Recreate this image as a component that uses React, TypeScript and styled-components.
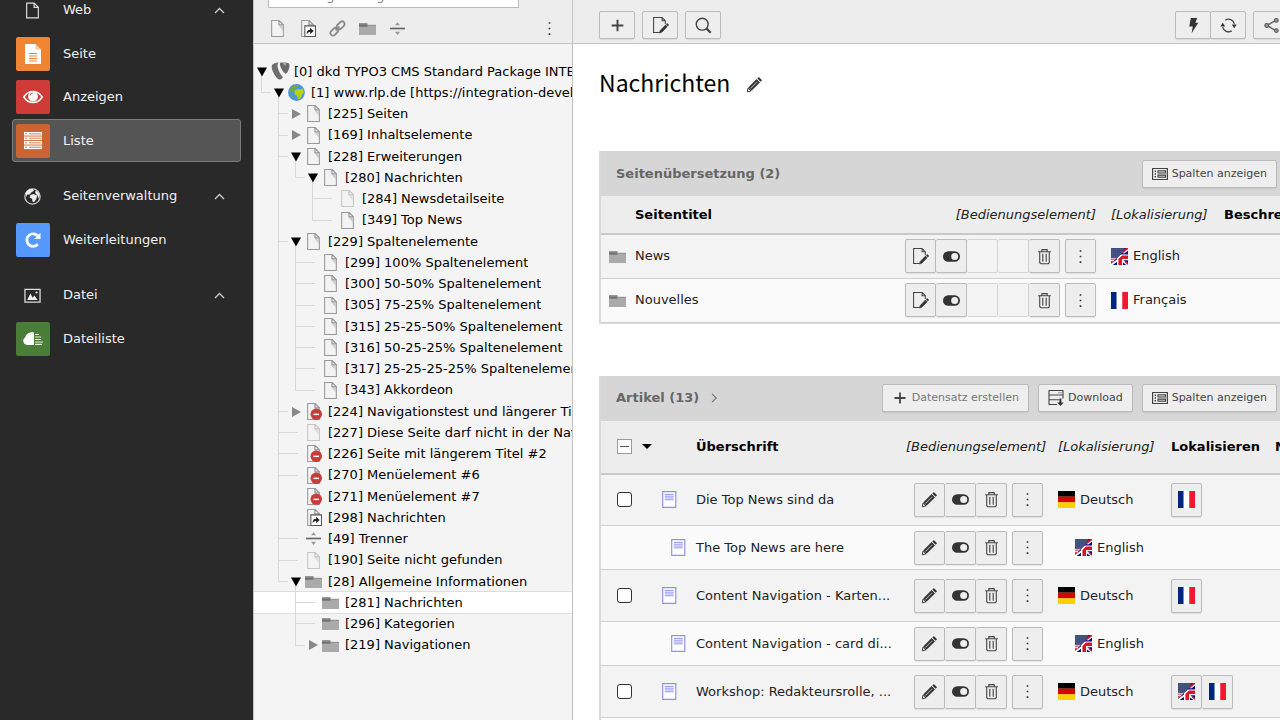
import React from "react";
import styled, { createGlobalStyle, css } from "styled-components";

const GlobalStyle = createGlobalStyle`
  * { box-sizing: border-box; }
  body {
    margin: 0;
    overflow: hidden;
    background: #fff;
    color: #222;
    font: 13px/20px Verdana, "DejaVu Sans", sans-serif;
  }
  button, input { font: inherit; color: inherit; margin: 0; padding: 0; }
  a { color: inherit; text-decoration: none; }
  ul { list-style: none; margin: 0; padding: 0; }
  svg { display: block; flex: none; }
`;

/* ---------- icons ---------- */

const Svg = ({ size = 17, children }: { size?: number; children: React.ReactNode }) => (
  <svg width={size} height={size} viewBox="0 0 16 16" aria-hidden="true">
    {children}
  </svg>
);

const PageShape = ({ faded }: { faded?: boolean }) => (
  <g opacity={faded ? 0.5 : 1}>
    <path d="M2.5.5h7l4 4v11h-11z" fill="#f3f3f3" stroke="#999" />
    <path d="M8.5 1v3.5L13 10V5L9 1z" fill="#ccc" />
    <path d="M9.5.5v4h4z" fill="#fff" stroke="#999" strokeLinejoin="round" />
  </g>
);
const PageIcon = ({ faded }: { faded?: boolean }) => (
  <Svg><PageShape faded={faded} /></Svg>
);
const HiddenPageIcon = () => (
  <Svg>
    <PageShape />
    <circle cx="10.6" cy="10.6" r="5.4" fill="#c83c3c" />
    <path d="M8 10h5.200v1.400H8z" fill="#fff" />
  </Svg>
);
const ShortcutIcon = () => (
  <Svg>
    <PageShape />
    <path d="M5.500 5.500h10v10h-10z" fill="#fff" stroke="#555" />
    <path d="M7.300 13.500c-.4-2.600.8-4.400 3.200-4.400V7.200l3.300 3.100-3.300 3V11.400c-1.300-.1-2.300.6-3.200 2.100z" fill="#222" />
  </Svg>
);
const LinkIcon = () => (
  <Svg>
    <g fill="none" stroke="#8a8a8a" strokeWidth="1.700" transform="rotate(-45 8 8)">
      <rect x="-.4" y="5.600" width="8.200" height="4.800" rx="2.400" />
      <rect x="8.200" y="5.600" width="8.200" height="4.800" rx="2.400" />
      <path d="M5.500 8h5" />
    </g>
  </Svg>
);
const FolderIcon = () => (
  <Svg>
    <path d="M0 3h8v2h8v9H0z" fill="#aaa" />
    <path d="M0 3h7.500l.5.600v2.400H0z" fill="#8a8a8a" />
    <path d="M0 4.600h8v1.600H0z" fill="#6f6f6f" />
    <path d="M8 4.500h8V5.500H8z" fill="#8f8f8f" />
  </Svg>
);
const DividerIcon = () => (
  <Svg>
    <path d="M1 7.200h14v1.600H1z" fill="#666" />
    <path d="M8 2l2.400 3H5.600zM8 14l2.400-3H5.600z" fill="#999" />
  </Svg>
);
const DotsIcon = () => (
  <Svg>
    <path d="M7.200 2h1.600v1.600H7.200zM7.200 7.200h1.600v1.600H7.200zM7.200 12.400h1.600V14H7.200z" fill="#333" />
  </Svg>
);
const TypoIcon = () => (
  <svg width="19" height="19" viewBox="0 0 18 18" aria-hidden="true">
    <path d="M1.200 2.600C2 1.500 4.600.8 7.300.5 6.400 1.400 6 2.600 6.300 4.400c.5 3.400 2.500 7.300 5 10-1.300 1.700-2.700 2.600-3.800 2.200C4.900 15.400 1.100 8.900.7 5.400.6 4.100.7 3.300 1.200 2.600z" fill="#6e6e6e" />
    <path d="M8.800.6c2.600-.3 6.400-.2 7.900.6.900.6 1 2.100.6 4-.4 2.200-1.800 5-3.200 6-2.200-1.200-4.900-5.200-5.500-8.200-.2-1-.2-1.900.2-2.400z" fill="#6a6a6a" />
    <path d="M10.800.6l2.800 3.400L14.600.6z" fill="#aaa" />
  </svg>
);
const WorldIcon = () => (
  <Svg>
    <circle cx="8" cy="8" r="7.900" fill="#4b94e6" />
    <path d="M4.500 1.800C6.500.8 9 .8 10.500 1.500l-1.300 1.700-2.400.4-1 1.800 1.400 1.400-.8 1.400-1.400-.6-1.900-1.600-.9 2-1.100-.4c.2-2.400 1.600-4.700 3.400-5.800z" fill="#6fae3a" />
    <path d="M7 5.500l3-.8 2.200.5 1.200-1.300c1.400 1.600 1.500 3.300 1.200 5l-1.200.4-.7 2.500-1.800 2.600-1.600-.3-.7-3-1.800-.8-1-2.400z" fill="#b5d312" />
    <path d="M2.400 9.400l1.800 1.200.6 2.600-1.500-.6z" fill="#6fae3a" />
  </Svg>
);
const PencilIcon = () => (
  <Svg>
    <path d="M12.100.9l3 3-1.400 1.400-3-3z" fill="#333" />
    <path d="M10 2.900l3.100 3.100-7.900 7.900-3.100-3.100z" fill="#333" />
    <path d="M10.300 5.100l.6.600-6.300 6.300-.6-.6z" fill="#aaa" />
    <path d="M1.900 11.400l2.700 2.700-3.400.8z" fill="#fff" stroke="#333" strokeWidth=".9" />
  </Svg>
);
const EditPageIcon = () => (
  <Svg>
    <path d="M7 14.500H1.500v-14h8L12.500 3.500v3M9.500.5v3h3" fill="none" stroke="#444" />
    <path d="M14.300 6l1.500 1.500-1 1-1.500-1.500zM12.700 7.600l1.600 1.600-5 5.100-2.400.8.800-2.400z" fill="#333" stroke="#333" strokeWidth=".5" />
  </Svg>
);
const PlusIcon = ({ size }: { size?: number }) => (
  <Svg size={size}><path d="M7.100 2.500h1.800v4.600h4.600v1.800H8.900v4.600H7.100V8.900H2.500V7.100h4.600z" fill="#444" /></Svg>
);
const SearchIcon = () => (
  <Svg>
    <circle cx="6.800" cy="6.800" r="5.600" fill="none" stroke="#444" strokeWidth="1.300" />
    <path d="M10.800 10.800l4 4" stroke="#444" strokeWidth="2.200" />
  </Svg>
);
const BoltIcon = () => (
  <Svg><path d="M5.500 1h6L9.700 5.500h2.800L6.200 15.300 7.300 9H4z" fill="#333" /></Svg>
);
const RefreshIcon = () => (
  <Svg>
    <g fill="none" stroke="#444" strokeWidth="1.200">
      <path d="M2.500 9.500a5.700 5.700 0 0 0 8.500 3.600" />
      <path d="M13.500 6.500A5.700 5.700 0 0 0 5 2.900" />
    </g>
    <path d="M2.600 5.500L4.900 9H.3zM13.400 10.500L11.100 7h4.600z" fill="#333" />
  </Svg>
);
const ShareIcon = () => (
  <Svg>
    <path d="M12.500 3L3.500 8l9 5" fill="none" stroke="#666" strokeWidth="1.400" />
    <g fill="#999" stroke="#555">
      <circle cx="12.500" cy="3.200" r="1.800" />
      <circle cx="3.500" cy="8" r="1.800" />
      <circle cx="12.500" cy="12.800" r="1.800" />
    </g>
  </Svg>
);
const ColumnsIcon = () => (
  <Svg size={16}>
    <path d="M.6 2.500h14.800v11H.6z" fill="none" stroke="#444" strokeWidth="1.200" />
    <path d="M2.600 4.600h1.400v1.400H2.600zM2.600 7.300h1.400v1.400H2.600zM2.600 10.100h1.400v1.400H2.600z" fill="#444" />
    <path d="M6 4.700h7.500v2.300H6zM6 9.100h7.500v2.200H6z" fill="#ccc" stroke="#444" strokeWidth="1.100" />
  </Svg>
);
const DownloadIcon = () => (
  <Svg size={16}>
    <path d="M9 14.500H1v-14h14v8M1 5h14M1 9.700h10" fill="none" stroke="#444" strokeWidth="1.100" />
    <path d="M10.500 2.300h1v1h-1zM12.500 2.300h1v1h-1z" fill="#444" />
    <path d="M11.400 8.500h2v4h2.300l-3.300 3.500-3.300-3.500h2.300z" fill="#333" />
  </Svg>
);
const ToggleIcon = () => (
  <Svg>
    <rect x="0" y="3" width="16" height="10" rx="5" fill="#333" />
    <circle cx="11" cy="8" r="3.300" fill="#eee" />
  </Svg>
);
const TrashIcon = () => (
  <Svg>
    <path d="M2 3.500h12M5.500 3.500v-2h5v2M3.500 3.500v10.300l1 1h7l1-1V3.500M6.400 5.500v7.500M9.600 5.500v7.500" fill="none" stroke="#444" strokeWidth="1.050" />
  </Svg>
);
const NewsIcon = () => (
  <Svg>
    <path d="M1.600.6h12.300v14.800H1.600z" fill="#fff" stroke="#8c92e8" strokeWidth="1.100" />
    <path d="M3.500 3.200h8.500M3.500 4.900h8.500M3.500 6.600h8.500M3.500 8.300h8.500" stroke="#8c92e8" strokeWidth=".9" />
  </Svg>
);
const GermanFlag = () => (
  <Svg>
    <path d="M0 0h16v5.400H0z" fill="#000" />
    <path d="M0 5.300h16v5.400H0z" fill="#d00" />
    <path d="M0 10.600h16V16H0z" fill="#ffce00" />
  </Svg>
);
const FrenchFlag = () => (
  <Svg>
    <path d="M0 0h5.500v16H0z" fill="#00267f" />
    <path d="M5.300 0h5.400v16H5.300z" fill="#fff" />
    <path d="M10.600 0H16v16h-5.400z" fill="#f31830" />
  </Svg>
);
const EnglishFlag = () => (
  <Svg>
    <path d="M0 0h16v16H0z" fill="#00107d" />
    <path d="M11 3.500L16 0v2.500L12 5.500z" fill="#fff" />
    <path d="M16 0v1.200L11 5l-1.500-.6L14 0z" fill="#dc1428" />
    <path d="M16 3.500V6h-3.500z" fill="#00107d" />
    <path d="M11 11l5 3.600V16h-1.600L10.500 13zM6 10.500L0 14.800V16h1.600L7 12z" fill="#fff" />
    <path d="M5.600 16V9.500L9 6.200h7v5.400h-4.700V16z" fill="#fff" />
    <path d="M7 16v-5.700L10.200 7H16v3.300h-5.600V16z" fill="#dc1428" />
    <path d="M16 14.200V16l-3.600-3h2z" fill="#dc1428" />
    <path d="M0 9h5.800L1.500 13.500H0z" fill="#fff" />
    <path d="M0 9.800h5L3.800 11H0zM0 12h2.800l-1.200 1.300H0z" fill="#d8505f" />
    <path d="M0 0h12.800L10.200 5 6 9.200H0z" fill="#3f4f7d" />
    <path d="M1 1.500h10M1 3.500h9M1 5.500h8M1 7.500h6" stroke="#5d6c94" strokeWidth=".7" strokeDasharray=".8 1.200" />
  </Svg>
);
const flags = { de: <GermanFlag />, fr: <FrenchFlag />, en: <EnglishFlag /> };

const ChevronUp = () => (
  <svg width="11" height="7" viewBox="0 0 11 7" aria-hidden="true">
    <path d="M1 6l4.500-4.500L10 6" fill="none" stroke="#ccc" strokeWidth="1.300" />
  </svg>
);
const ChevronRight = () => (
  <svg width="10" height="10" viewBox="0 0 10 10" aria-hidden="true">
    <path d="M4 .8L8.200 5 4 9.200" fill="none" stroke="#777" strokeWidth="1.200" />
  </svg>
);

/* module menu icons */
const WebIcon = () => (
  <Svg><path d="M2.500 1h7l4 4v10h-11zM9.500 1v4h4" fill="none" stroke="#ddd" strokeWidth="1.100" /></Svg>
);
const GlobeIcon = () => (
  <Svg>
    <circle cx="8" cy="8" r="7.200" fill="none" stroke="#ccc" strokeWidth="1.200" />
    <path d="M1.500 5C3 2 5.500.8 8 1l1.500 1.500L7 4 5.500 6.200 3 6l-1 2.500zM6 6.500l3-.8 2 1 1.500.3-.8 3L9.500 13.500l-1.500-.7L7.600 10 5.300 9zM11 2.500l2 .8 1.700 3-.7 4-1.200-3.200L11 5.500l-.6-1.700z" fill="#eee" />
  </Svg>
);
const ImageIcon = () => (
  <Svg>
    <path d="M.9 2.200h14.200v12H.9z" fill="none" stroke="#ddd" strokeWidth="1.200" />
    <path d="M3 12.200l3-6.200 2.200 4 1.600-2 3 4.200z" fill="#eee" />
    <circle cx="11.800" cy="5.200" r="1" fill="#eee" />
  </Svg>
);
const Glyph = ({ children }: { children: React.ReactNode }) => (
  <svg width="34" height="34" viewBox="0 0 34 34" aria-hidden="true">{children}</svg>
);
const LayoutGlyph = () => (
  <Glyph>
    <path d="M9 7h10.500l5.500 5.500V27H9z" fill="#fff" />
    <path d="M19.500 7v5.500H25z" fill="#f8c79c" />
    <path d="M13 16.500h8M13 19h8M13 21.500h8M13 24h8" stroke="#ef8533" strokeWidth="1" />
  </Glyph>
);
const ViewGlyph = () => (
  <Glyph>
    <path d="M7.800 17C12.500 9.600 21.500 9.600 26.200 17 21.500 24.400 12.500 24.400 7.800 17z" fill="none" stroke="#fff" strokeWidth="1.500" />
    <circle cx="17" cy="16.500" r="4.900" fill="#fff" />
    <path d="M14 15.500a3 3 0 0 1 2.800-2.500" fill="none" stroke="#cf3b37" strokeWidth=".9" />
  </Glyph>
);
const ListGlyph = () => (
  <Glyph>
    {[8, 12.5, 17, 21.5].map((y) => (
      <g key={y}>
        <path d={`M8 ${y}h18v3.600H8z`} fill="#fff" />
        <path d={`M13 ${y + 1.1}h12v1.400H13z`} fill="#dba285" />
        <path d={`M9 ${y + 1.1}h2v1.400H9z`} fill="#dba285" />
      </g>
    ))}
  </Glyph>
);
const RedirectGlyph = () => (
  <Glyph>
    <path d="M22.300 13.400A6.300 6.300 0 1 0 21.900 21.200" fill="none" stroke="#fff" strokeWidth="2.700" />
    <path d="M24.500 9.800v6.200H18.200z" fill="#fff" />
  </Glyph>
);
const FilesGlyph = () => (
  <Glyph>
    <path d="M18 23h-7a4 4 0 0 1-1.800-7.400C9.800 12 13.800 9.600 18 10.500z" fill="#fff" />
    <path d="M19 12.500h4M19 15h6M19 17.500h6M19 20h8M19 22.300h7" stroke="#e5eee0" strokeWidth="1.200" />
  </Glyph>
);

/* ---------- shell ---------- */

const Shell = styled.div`
  display: flex;
  height: 100vh;
  overflow: hidden;
`;

const Sidebar = styled.nav`
  flex: none;
  width: 253px;
  padding: 0 12px;
  background: #292929;
  color: #f0f0f0;
  overflow: hidden;
`;

/* the menu is scrolled a little, its first heading starts above the window */
const ModuleGroup = styled.section`
  margin-bottom: 13px;
  &:first-child { margin-top: -11px; }
`;
const GroupHeader = styled.button`
  display: flex;
  align-items: center;
  width: 100%;
  height: 42px;
  margin-bottom: 1px;
  padding: 0 16px 0 12px;
  border: 0;
  background: none;
  text-align: left;
`;
const GroupLabel = styled.span`
  flex: 1;
  padding-left: 22px;
`;
const ModuleList = styled.ul`
  display: grid;
  grid-auto-rows: 43px 44px 43px;
`;
const ModuleLink = styled.a<{ $active?: boolean }>`
  display: flex;
  align-items: center;
  gap: 13px;
  height: 43px;
  padding-left: 3px;
  border: 1px solid ${(p) => (p.$active ? "#7c7c7c" : "transparent")};
  border-radius: 3px;
  background: ${(p) => (p.$active ? "#555" : "none")};
`;
const Tile = styled.span<{ $color: string }>`
  width: 34px;
  height: 34px;
  border-radius: 2px;
  background: ${(p) => p.$color};
`;

const groups = [
  {
    name: "Web",
    icon: <WebIcon />,
    items: [
      { name: "Seite", color: "#ef8533", icon: <LayoutGlyph /> },
      { name: "Anzeigen", color: "#cf3b37", icon: <ViewGlyph /> },
      { name: "Liste", color: "#cb6432", icon: <ListGlyph />, active: true },
    ],
  },
  {
    name: "Seitenverwaltung",
    icon: <GlobeIcon />,
    items: [{ name: "Weiterleitungen", color: "#5599ff", icon: <RedirectGlyph /> }],
  },
  {
    name: "Datei",
    icon: <ImageIcon />,
    items: [{ name: "Dateiliste", color: "#4a7d37", icon: <FilesGlyph /> }],
  },
];

/* ---------- page tree ---------- */

const TreePane = styled.aside`
  display: flex;
  flex-direction: column;
  flex: none;
  width: 320px;
  border: solid #c3c3c3;
  border-width: 0 1px;
  background: #f4f4f4;
  color: #000;
  overflow: hidden;
`;
const TreeHeader = styled.header`
  display: flex;
  flex-direction: column;
  justify-content: flex-end;
  gap: 5px;
  flex: none;
  height: 44px;
  padding: 0 8px;
  border-bottom: 1px solid #c3c3c3;
  background: #ededed;
  overflow: hidden;
`;
const SearchInput = styled.input`
  flex: none;
  width: 251px;
  height: 26px;
  margin-left: 6px;
  padding: 0 9px;
  border: 1px solid #bbb;
  background: #fff;
  &::placeholder { color: #888; }
`;
const TreeTools = styled.div`
  display: flex;
  flex: none;
  height: 30px;
`;
const ToolButton = styled.button`
  display: grid;
  place-items: center;
  width: 30px;
  border: 0;
  background: none;
  &:last-child { margin-left: auto; }
`;
const TreeList = styled.ul`
  display: grid;
  grid-template-columns: minmax(0, 1fr);
  grid-auto-rows: 21px 21px 21px 22px;
  padding-top: 17px;
`;
const TreeRow = styled.li<{ $selected?: boolean }>`
  display: flex;
  align-items: center;
  white-space: nowrap;
  ${(p) => p.$selected && css`
    background: #fff;
    box-shadow: 0 -1px #ddd, 0 1px #ddd;
  `}
`;
const line = "linear-gradient(#d8d8d8, #d8d8d8) no-repeat";
const Guide = styled.span<{ $kind: string }>`
  align-self: stretch;
  flex: none;
  width: 17px;
  background: ${(p) =>
    ({
      " ": "none",
      "|": `${line} 7px 0 / 1px 100%`,
      "+": `${line} 7px 0 / 1px 100%, ${line} 7px 50% / 10px 1px`,
      L: `${line} 7px 0 / 1px 50%, ${line} 7px 50% / 10px 1px`,
    })[p.$kind]};
`;
const ToggleCell = styled.span<{ $dash: boolean; $stem: boolean }>`
  display: grid;
  place-items: center;
  align-self: stretch;
  flex: none;
  width: 17px;
  background: ${(p) =>
    p.$dash ? `${line} 0 50% / 10px 1px` : p.$stem ? `${line} 7px 100% / 1px 50%` : "none"};
`;
const Toggle = styled.button`
  display: grid;
  place-items: center;
  border: 0;
  background: none;
`;
const NodeIcon = styled.span`
  display: grid;
  place-items: center;
  flex: none;
  width: 17px;
`;
const NodeLink = styled.a`
  min-width: 0;
  padding-left: 6px;
  overflow: hidden;
`;

type Node = { g: string; t?: "open" | "closed"; i: string; n: string; sel?: boolean };
const nodes: Node[] = [
  { g: "", t: "open", i: "typo", n: "[0] dkd TYPO3 CMS Standard Package INTEGRATION" },
  { g: "L", t: "open", i: "world", n: "[1] www.rlp.de [https://integration-development]" },
  { g: " +", t: "closed", i: "page", n: "[225] Seiten" },
  { g: " +", t: "closed", i: "page", n: "[169] Inhaltselemente" },
  { g: " +", t: "open", i: "page", n: "[228] Erweiterungen" },
  { g: " |L", t: "open", i: "page", n: "[280] Nachrichten" },
  { g: " | +", i: "faded", n: "[284] Newsdetailseite" },
  { g: " | L", i: "page", n: "[349] Top News" },
  { g: " +", t: "open", i: "page", n: "[229] Spaltenelemente" },
  { g: " |+", i: "page", n: "[299] 100% Spaltenelement" },
  { g: " |+", i: "page", n: "[300] 50-50% Spaltenelement" },
  { g: " |+", i: "page", n: "[305] 75-25% Spaltenelement" },
  { g: " |+", i: "page", n: "[315] 25-25-50% Spaltenelement" },
  { g: " |+", i: "page", n: "[316] 50-25-25% Spaltenelement" },
  { g: " |+", i: "page", n: "[317] 25-25-25-25% Spaltenelement" },
  { g: " |L", i: "page", n: "[343] Akkordeon" },
  { g: " +", t: "closed", i: "hidden", n: "[224] Navigationstest und längerer Titel" },
  { g: " +", i: "faded", n: "[227] Diese Seite darf nicht in der Navigation" },
  { g: " +", i: "hidden", n: "[226] Seite mit längerem Titel #2" },
  { g: " +", i: "hidden", n: "[270] Menüelement #6" },
  { g: " |", i: "hidden", n: "[271] Menüelement #7" },
  { g: " |", i: "shortcut", n: "[298] Nachrichten" },
  { g: " +", i: "divider", n: "[49] Trenner" },
  { g: " +", i: "faded", n: "[190] Seite nicht gefunden" },
  { g: " L", t: "open", i: "folder", n: "[28] Allgemeine Informationen" },
  { g: "  +", i: "folder", n: "[281] Nachrichten", sel: true },
  { g: "  +", i: "folder", n: "[296] Kategorien" },
  { g: "  L", t: "closed", i: "folder", n: "[219] Navigationen" },
];
const nodeIcons: Record<string, React.ReactNode> = {
  typo: <TypoIcon />,
  world: <WorldIcon />,
  page: <PageIcon />,
  faded: <PageIcon faded />,
  hidden: <HiddenPageIcon />,
  shortcut: <ShortcutIcon />,
  divider: <DividerIcon />,
  folder: <FolderIcon />,
};

const TreeToggle = ({ open }: { open: boolean }) => (
  <Toggle aria-label={open ? "Zuklappen" : "Aufklappen"} aria-expanded={open}>
    <svg width="11" height="10" viewBox="0 0 11 10" aria-hidden="true">
      {open ? <path d="M0 .5h10L5 9.500z" fill="#000" /> : <path d="M1 0v10L10 5z" fill="#888" />}
    </svg>
  </Toggle>
);

/* ---------- content ---------- */

const Main = styled.main`
  flex: 1;
  min-width: 0;
  overflow: hidden;
`;
const MainInner = styled.div`
  min-width: 740px;
`;
const DocHeader = styled.header`
  display: flex;
  align-items: flex-end;
  gap: 7px;
  height: 44px;
  padding: 0 24px 4px 26px;
  border-bottom: 1px solid #c3c3c3;
  background: #ededed;
`;
const Spacer = styled.span`
  flex: 1;
`;
const Group = styled.span`
  display: inline-flex;
`;
const raised = css`
  border: 1px solid #bbb;
  background: #eee;
  box-shadow: 0 1px 1px rgba(0, 0, 0, 0.08);
`;
const HeadButton = styled.button`
  ${raised}
  display: grid;
  place-items: center;
  width: 36px;
  height: 28px;
  border-radius: 2px;
  ${Group} > & + & {
    margin-left: -1px;
  }
`;
const Body = styled.div`
  padding: 20px 24px 0 26px;
`;
const TitleRow = styled.div`
  display: flex;
  align-items: center;
  gap: 16px;
  height: 36px;
  margin-bottom: 51px;
`;
const Title = styled.h1`
  margin: 0;
  color: #000;
  font: 400 23px/36px "Noto Sans CJK SC", "Noto Sans", sans-serif;
`;
const TitleEdit = styled.button`
  margin-top: 4px;
  border: 0;
  background: none;
`;
const Panel = styled.section`
  margin-bottom: 52px;
  border: solid #d9d9d9;
  border-width: 0 2px 1px;
  overflow: hidden;
`;
const PanelHead = styled.div`
  display: flex;
  align-items: center;
  gap: 9px;
  height: 45px;
  margin: 0 -2px;
  padding: 0 12px 0 17px;
  background: #d6d6d6;
`;
const PanelTitle = styled.h2`
  margin: 0;
  color: #666;
  font-size: 13px;
  font-weight: 700;
  line-height: 20px;
`;
const PanelButton = styled.button<{ $muted?: boolean }>`
  ${raised}
  display: flex;
  align-items: center;
  gap: 4px;
  height: 28px;
  padding: 0 9px;
  border-radius: 2px;
  color: ${(p) => (p.$muted ? "#777" : "#444")};
  font-size: 11px;
  white-space: nowrap;
`;
const Table = styled.table`
  width: 100%;
  table-layout: fixed;
  border-collapse: collapse;
`;
const HeadRow = styled.tr<{ $tall?: boolean }>`
  height: ${(p) => (p.$tall ? "53px" : "38px")};
  border-bottom: 2px solid #c8c8c8;
  background: #ededed;
`;
const Row = styled.tr<{ $alt?: boolean; $tall?: boolean }>`
  height: ${(p) => (p.$tall ? "52px" : "44px")};
  border-bottom: 1px solid #d0d0d0;
  background: ${(p) => (p.$alt ? "#fafafa" : "#f3f3f3")};
`;
const Th = styled.th<{ $meta?: boolean; $right?: boolean }>`
  padding: 0 7px 0 8px;
  color: ${(p) => (p.$meta ? "#222" : "#000")};
  font-weight: ${(p) => (p.$meta ? 400 : 700)};
  font-style: ${(p) => (p.$meta ? "italic" : "normal")};
  text-align: ${(p) => (p.$right ? "right" : "left")};
  white-space: nowrap;
`;
const Td = styled.td`
  padding: 0 7px 0 8px;
  white-space: nowrap;
`;
const Controls = styled.div`
  display: flex;
  justify-content: flex-end;
  gap: 5px;
`;
const ControlButton = styled.button`
  ${raised}
  display: grid;
  place-items: center;
  width: 31px;
  height: 34px;
  border-radius: 2px;
  ${Group} > & + & { border-left: 0; }
  &:disabled {
    border-color: #d4d4d4;
    background: #f3f3f3;
    box-shadow: none;
  }
`;
const Language = styled.span<{ $nested?: boolean }>`
  display: flex;
  align-items: center;
  gap: 5px;
  padding-left: ${(p) => (p.$nested ? "17px" : "0")};
`;
const RecordIcon = styled.span<{ $nested?: boolean }>`
  display: block;
  padding-left: ${(p) => (p.$nested ? "9px" : "0")};
`;
const SelectCell = styled.div`
  display: flex;
  align-items: center;
  gap: 10px;
  padding-left: 8px;
`;
const Check = styled.input`
  display: block;
  appearance: none;
  flex: none;
  width: 15px;
  height: 15px;
  border: 1px solid #333;
  border-radius: 3px;
  background: #fff;
`;
const CheckAll = styled(Check)`
  border-color: #999;
  border-radius: 0;
  background: linear-gradient(#555, #555) center / 9px 1px no-repeat #fff;
`;
const Caret = styled.button`
  flex: none;
  border: 0;
  background: none;
`;

const ShowColumns = () => (
  <PanelButton><ColumnsIcon />Spalten anzeigen</PanelButton>
);

const pages = [
  { title: "News", lang: "en" as const, label: "English" },
  { title: "Nouvelles", lang: "fr" as const, label: "Français" },
];

type Lang = "de" | "en" | "fr";
const records: { title: string; nested?: boolean; to: Lang[] }[] = [
  { title: "Die Top News sind da", to: ["fr"] },
  { title: "The Top News are here", nested: true, to: [] },
  { title: "Content Navigation - Karten...", to: ["fr"] },
  { title: "Content Navigation - card di...", nested: true, to: [] },
  { title: "Workshop: Redakteursrolle, ...", to: ["en", "fr"] },
];

export default function App() {
  return (
    <>
      <GlobalStyle />
      <Shell>
        <Sidebar>
          {groups.map((g) => (
            <ModuleGroup key={g.name}>
              <GroupHeader aria-expanded="true">
                {g.icon}
                <GroupLabel>{g.name}</GroupLabel>
                <ChevronUp />
              </GroupHeader>
              <ModuleList>
                {g.items.map((m) => (
                  <li key={m.name}>
                    <ModuleLink href="#" $active={"active" in m}>
                      <Tile $color={m.color}>{m.icon}</Tile>
                      {m.name}
                    </ModuleLink>
                  </li>
                ))}
              </ModuleList>
            </ModuleGroup>
          ))}
        </Sidebar>

        <TreePane>
          <TreeHeader>
            <SearchInput type="text" placeholder="Suchbegriff eingeben" aria-label="Suchbegriff" />
            <TreeTools>
              <ToolButton aria-label="Neue Seite"><PageIcon /></ToolButton>
              <ToolButton aria-label="Verweis"><ShortcutIcon /></ToolButton>
              <ToolButton aria-label="Link"><LinkIcon /></ToolButton>
              <ToolButton aria-label="Ordner"><FolderIcon /></ToolButton>
              <ToolButton aria-label="Trenner"><DividerIcon /></ToolButton>
              <ToolButton aria-label="Optionen"><DotsIcon /></ToolButton>
            </TreeTools>
          </TreeHeader>
          <TreeList>
            {nodes.map((n) => (
              <TreeRow key={n.n} $selected={n.sel}>
                {n.g.split("").map((k, i) => <Guide key={i} $kind={k} />)}
                <ToggleCell $dash={!n.t && !n.g.endsWith("|")} $stem={n.t === "open"}>
                  {n.t && <TreeToggle open={n.t === "open"} />}
                </ToggleCell>
                <NodeIcon>{nodeIcons[n.i]}</NodeIcon>
                <NodeLink href="#">{n.n}</NodeLink>
              </TreeRow>
            ))}
          </TreeList>
        </TreePane>

        <Main>
          <MainInner>
            <DocHeader>
              <HeadButton aria-label="Neuer Datensatz"><PlusIcon /></HeadButton>
              <HeadButton aria-label="Seite bearbeiten"><EditPageIcon /></HeadButton>
              <HeadButton aria-label="Suchen"><SearchIcon /></HeadButton>
              <Spacer />
              <Group>
                <HeadButton aria-label="Cache leeren"><BoltIcon /></HeadButton>
                <HeadButton aria-label="Neu laden"><RefreshIcon /></HeadButton>
              </Group>
              <HeadButton aria-label="Teilen"><ShareIcon /></HeadButton>
            </DocHeader>

            <Body>
              <TitleRow>
                <Title>Nachrichten</Title>
                <TitleEdit aria-label="Titel bearbeiten"><PencilIcon /></TitleEdit>
              </TitleRow>

              <Panel>
                <PanelHead>
                  <PanelTitle>Seitenübersetzung (2)</PanelTitle>
                  <Spacer />
                  <ShowColumns />
                </PanelHead>
                <Table>
                  <colgroup>
                    <col width="26" /><col /><col width="206" /><col width="113" /><col width="71" />
                  </colgroup>
                  <thead>
                    <HeadRow>
                      <Th aria-label="Symbol" />
                      <Th>Seitentitel</Th>
                      <Th $meta $right>[Bedienungselement]</Th>
                      <Th $meta>[Lokalisierung]</Th>
                      <Th>Beschreibung</Th>
                    </HeadRow>
                  </thead>
                  <tbody>
                    {pages.map((p, i) => (
                      <Row key={p.title} $alt={i % 2 === 1}>
                        <Td><RecordIcon><FolderIcon /></RecordIcon></Td>
                        <Td>{p.title}</Td>
                        <Td>
                          <Controls>
                            <Group>
                              <ControlButton aria-label="Bearbeiten"><EditPageIcon /></ControlButton>
                              <ControlButton aria-label="Verbergen"><ToggleIcon /></ControlButton>
                              <ControlButton disabled aria-label="Nach oben" />
                              <ControlButton disabled aria-label="Nach unten" />
                              <ControlButton aria-label="Löschen"><TrashIcon /></ControlButton>
                            </Group>
                            <ControlButton aria-label="Mehr"><DotsIcon /></ControlButton>
                          </Controls>
                        </Td>
                        <Td><Language>{flags[p.lang]}{p.label}</Language></Td>
                        <Td />
                      </Row>
                    ))}
                  </tbody>
                </Table>
              </Panel>

              <Panel>
                <PanelHead>
                  <PanelTitle>Artikel (13)</PanelTitle>
                  <ChevronRight />
                  <Spacer />
                  <PanelButton $muted><PlusIcon size={16} />Datensatz erstellen</PanelButton>
                  <PanelButton><DownloadIcon />Download</PanelButton>
                  <ShowColumns />
                </PanelHead>
                <Table>
                  <colgroup>
                    <col width="52" /><col width="35" /><col /><col width="152" />
                    <col width="113" /><col width="104" /><col width="20" />
                  </colgroup>
                  <thead>
                    <HeadRow $tall>
                      <Th>
                        <SelectCell>
                          <CheckAll type="checkbox" aria-label="Alle auswählen" />
                          <Caret aria-label="Auswahl">
                            <svg width="10" height="5" viewBox="0 0 10 5" aria-hidden="true"><path d="M0 0h10L5 5z" /></svg>
                          </Caret>
                        </SelectCell>
                      </Th>
                      <Th aria-label="Symbol" />
                      <Th>Überschrift</Th>
                      <Th $meta $right>[Bedienungselement]</Th>
                      <Th $meta>[Lokalisierung]</Th>
                      <Th>Lokalisieren</Th>
                      <Th>Name</Th>
                    </HeadRow>
                  </thead>
                  <tbody>
                    {records.map((r) => (
                      <Row key={r.title} $alt={r.nested} $tall={!r.nested}>
                        <Td>
                          {!r.nested && (
                            <SelectCell><Check type="checkbox" aria-label={r.title} /></SelectCell>
                          )}
                        </Td>
                        <Td><RecordIcon $nested={r.nested}><NewsIcon /></RecordIcon></Td>
                        <Td>{r.title}</Td>
                        <Td>
                          <Controls>
                            <Group>
                              <ControlButton aria-label="Bearbeiten"><PencilIcon /></ControlButton>
                              <ControlButton aria-label="Verbergen"><ToggleIcon /></ControlButton>
                              <ControlButton aria-label="Löschen"><TrashIcon /></ControlButton>
                            </Group>
                            <ControlButton aria-label="Mehr"><DotsIcon /></ControlButton>
                          </Controls>
                        </Td>
                        <Td>
                          <Language $nested={r.nested}>
                            {r.nested ? flags.en : flags.de}
                            {r.nested ? "English" : "Deutsch"}
                          </Language>
                        </Td>
                        <Td>
                          <Group>
                            {r.to.map((l) => (
                              <ControlButton key={l} aria-label={`Lokalisieren: ${l}`}>{flags[l]}</ControlButton>
                            ))}
                          </Group>
                        </Td>
                        <Td />
                      </Row>
                    ))}
                    <Row $alt><Td colSpan={7} /></Row>
                  </tbody>
                </Table>
              </Panel>
            </Body>
          </MainInner>
        </Main>
      </Shell>
    </>
  );
}
